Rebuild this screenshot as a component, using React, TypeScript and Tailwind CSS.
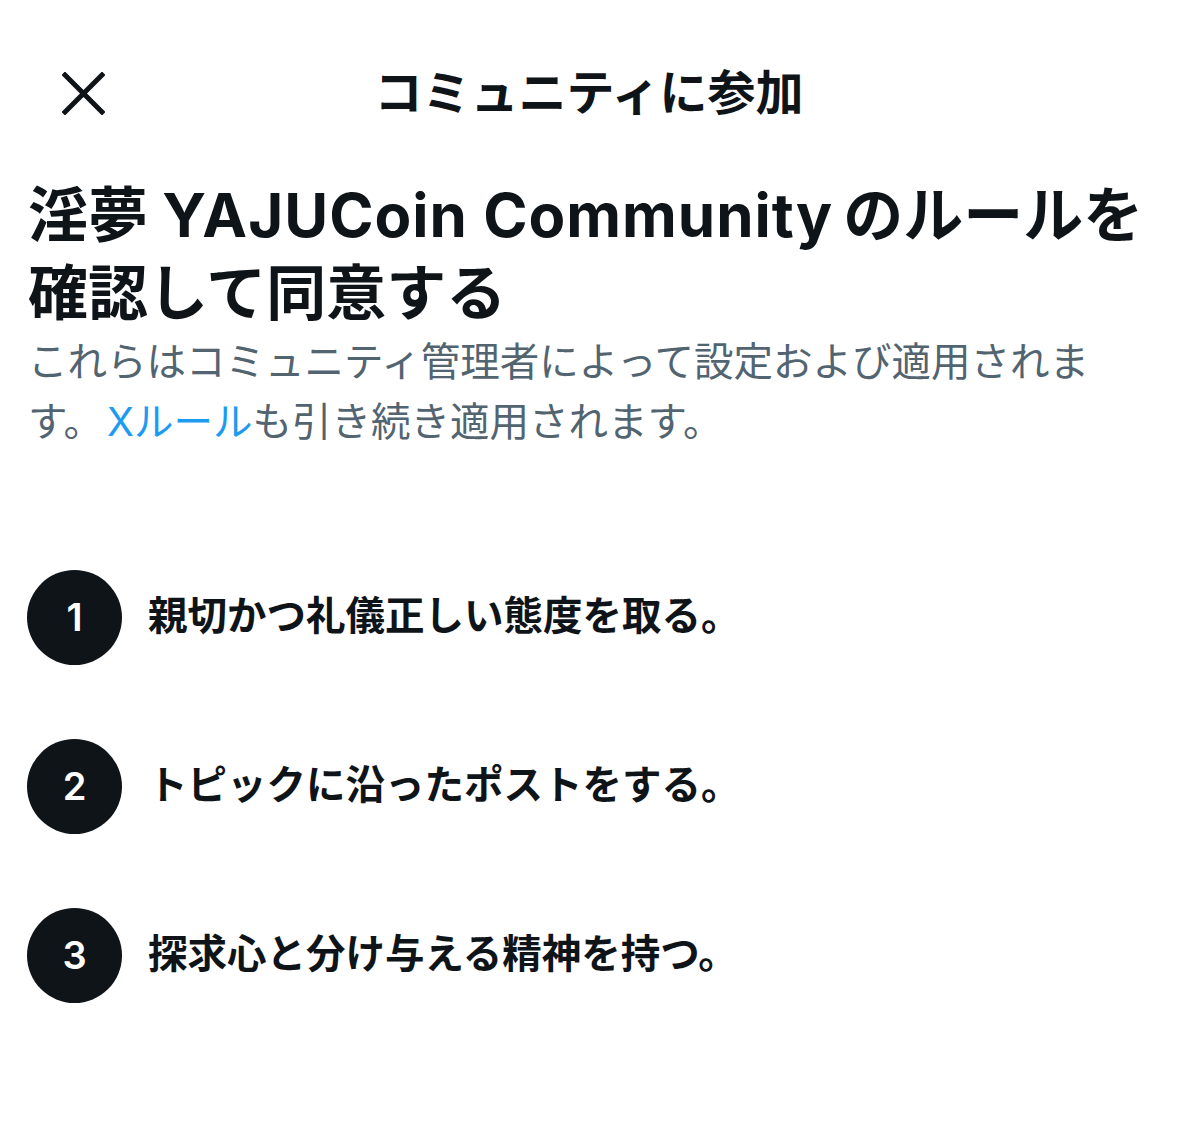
import React from "react";

const FONT = { fontFamily: '"Inter", "Noto Sans CJK JP", sans-serif' };

const rules = [
  "親切かつ礼儀正しい態度を取る。",
  "トピックに沿ったポストをする。",
  "探求心と分け与える精神を持つ。",
];

export default function App() {
  return (
    <div className="w-[1178px] min-h-[1134px] bg-white text-[#0f1419]" style={FONT}>
      <div className="grid grid-cols-[1fr_auto_1fr] items-center pt-[65px] h-[121px]">
        <div className="pl-[62px] flex items-center">
          <svg width="43" height="43" viewBox="0 0 43 43" fill="none">
            <path d="M3 3 L40 40 M40 3 L3 40" stroke="#0f1419" strokeWidth="5" strokeLinecap="square" />
          </svg>
        </div>
        <div className="text-[48px] leading-[56px] font-bold">コミュニティに参加</div>
        <div />
      </div>

      <div className="px-[28px] mt-[55px]">
        <h1 className="text-[60px] leading-[78px] font-bold">
          淫夢 <span className="tracking-[1px]">YAJUCoin Community</span>
          <span className="ml-[10px]">のルールを確認して同意する</span>
        </h1>
        <p className="text-[39.5px] leading-[60px] text-[#536471] pr-[50px]">
          これらはコミュニティ管理者によって設定および適用されます。
          <span className="text-[#1d9bf0] ml-[4px]">X</span>
          <span className="text-[#1d9bf0]">ルール</span>も引き続き適用されます。
        </p>
      </div>

      <div className="px-[27px] mt-[118px] flex flex-col gap-[74px]">
        {rules.map((r, i) => (
          <div key={i} className="flex items-center gap-[26px]">
            <div className="w-[95px] h-[95px] rounded-full bg-[#0f1419] text-white flex items-center justify-center text-[38px] font-semibold shrink-0">
              {i + 1}
            </div>
            <div className="text-[39.5px] font-bold leading-[50px] -mt-[4px]">{r}</div>
          </div>
        ))}
      </div>
    </div>
  );
}
